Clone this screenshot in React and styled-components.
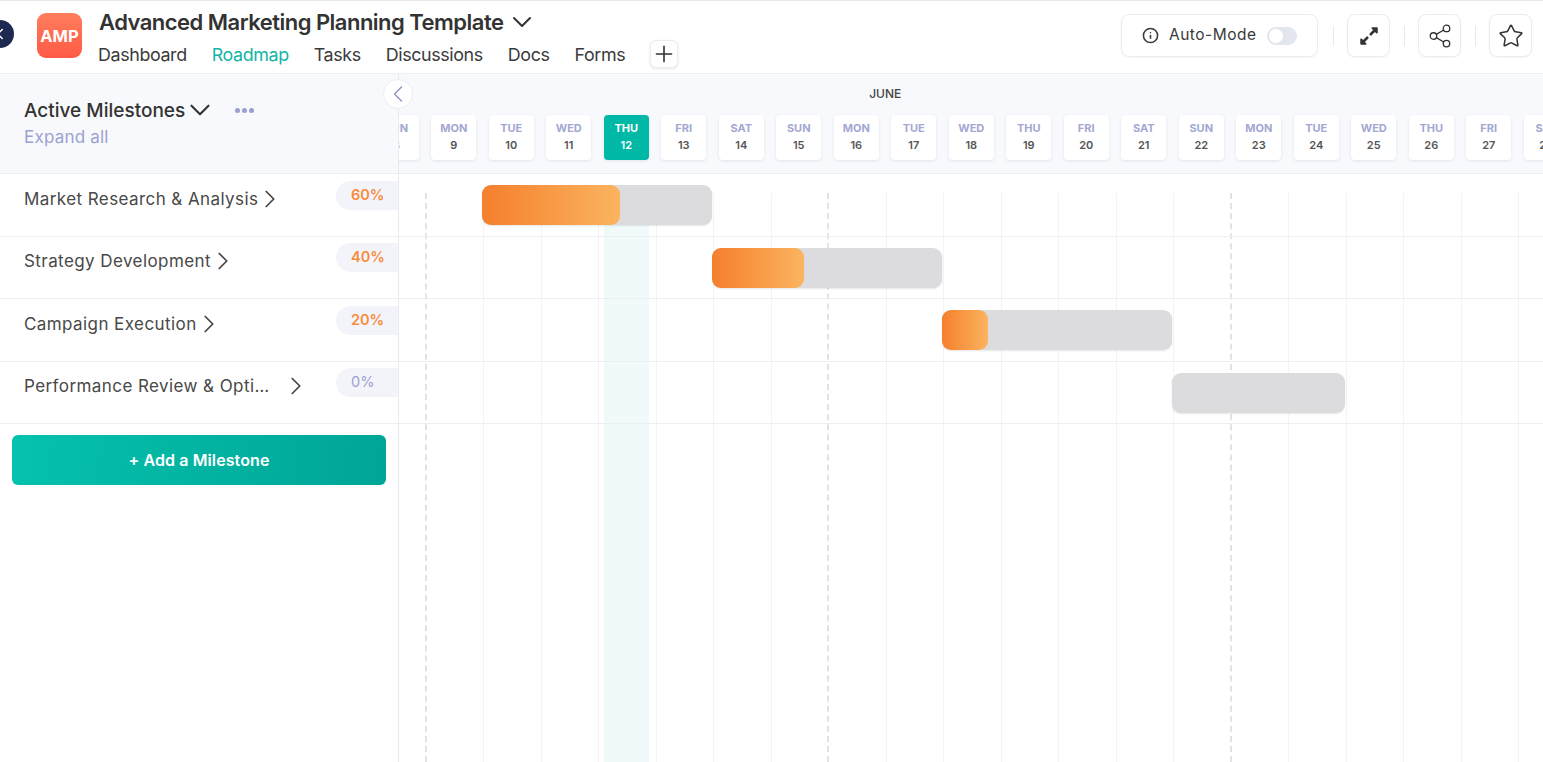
import React from "react";
import styled, { createGlobalStyle } from "styled-components";
import { ChevronDown, ChevronLeft, ChevronRight, Info, Plus, Star, Share2 } from "lucide-react";
import { FaExpandAlt } from "react-icons/fa";

const COL = 57.5;

const GlobalStyle = createGlobalStyle`
  html, body { margin: 0; padding: 0; background: #fff; overflow: hidden; }
  body { font-family: "Inter", "Liberation Sans", sans-serif; color: #333; }
  * { box-sizing: border-box; }
`;

const Page = styled.div`
  width: 1543px;
  height: 762px;
  display: flex;
  flex-direction: column;
  overflow: hidden;
`;

const Header = styled.header`
  height: 74px;
  flex-shrink: 0;
  display: flex;
  align-items: flex-start;
  border-top: 1px solid #e9e9ec;
  border-bottom: 1px solid #eeeff3;
  padding-right: 11px;
`;

const BackCircle = styled.div`
  width: 28px;
  height: 28px;
  margin: 19px 0 0 -14px;
  border-radius: 50%;
  background: #1d2951;
  color: #fff;
  display: flex;
  align-items: center;
  justify-content: center;
  flex-shrink: 0;
`;

const Logo = styled.div`
  width: 45px;
  height: 45px;
  margin: 12px 15px 0 23px;
  border-radius: 9px;
  background: linear-gradient(180deg, #ff7d5c 0%, #ff5a45 100%);
  color: #fff;
  font-size: 16.5px;
  font-weight: 700;
  display: flex;
  align-items: center;
  justify-content: center;
  flex-shrink: 0;
`;

const TitleBlock = styled.div`
  display: flex;
  flex-direction: column;
  flex-grow: 1;
`;

const TitleRow = styled.div`
  display: flex;
  align-items: center;
  gap: 3px;
  height: 26px;
  margin: 8px 0 0 2px;
`;

const Title = styled.h1`
  margin: 0;
  font-size: 22px;
  font-weight: 600;
  letter-spacing: -0.52px;
  color: #333;
  white-space: nowrap;
`;

const Tabs = styled.nav`
  display: flex;
  align-items: center;
  gap: 25px;
  margin: 5px 0 0 1px;
`;

const Tab = styled.a`
  font-size: 17.86px;
  letter-spacing: -0.38px;
  color: ${(p) => (p.$active ? "#12b5a5" : "#3a3a3a")};
  white-space: nowrap;
`;

const AddTab = styled.button`
  width: 28px;
  height: 28px;
  padding: 0;
  border: 1px solid #ececf0;
  border-radius: 6px;
  background: #fff;
  color: #333;
  box-shadow: 0 1px 3px rgba(0, 0, 0, 0.1);
  display: flex;
  align-items: center;
  justify-content: center;
`;

const Actions = styled.div`
  display: flex;
  align-items: center;
  margin-top: 13px;
`;

const AutoMode = styled.div`
  width: 197px;
  height: 43px;
  margin-right: 1px;
  border: 1px solid #ececf0;
  border-radius: 8px;
  box-shadow: 0 1px 2px rgba(0, 0, 0, 0.04);
  display: flex;
  align-items: center;
  padding-left: 20px;
  font-size: 15.5px;
  line-height: 40px;
  color: #3a3a3a;
  letter-spacing: 0.5px;
`;

const AutoLabel = styled.span`
  margin: -2px 10px 0 10px;
  white-space: nowrap;
`;

const Toggle = styled.span`
  width: 30px;
  height: 18px;
  border-radius: 9px;
  background: #e3e5ef;
  padding: 2px;
  display: flex;
  &::before {
    content: "";
    width: 14px;
    height: 14px;
    border-radius: 50%;
    background: #fff;
  }
`;

const Separator = styled.span`
  width: 1px;
  height: 20px;
  margin: 0 13.5px;
  background: #e9e9ec;
`;

const IconButton = styled.button`
  width: 43px;
  height: 43px;
  padding: 0;
  border: 1px solid #ececf0;
  border-radius: 8px;
  background: #fff;
  color: #333;
  box-shadow: 0 1px 2px rgba(0, 0, 0, 0.04);
  display: flex;
  align-items: center;
  justify-content: center;
`;

const Body = styled.main`
  flex-grow: 1;
  display: flex;
  min-height: 0;
`;

const Sidebar = styled.aside`
  width: 399px;
  flex-shrink: 0;
  position: relative;
  border-right: 1px solid #e9eaee;
`;

const SidebarHead = styled.div`
  height: 100px;
  padding: 24px 0 0 24px;
  background: #f8f9fc;
  border-bottom: 1px solid #eceef3;
`;

const HeadRow = styled.div`
  display: flex;
  align-items: center;
  height: 24px;
`;

const HeadTitle = styled.span`
  font-size: 19px;
  font-weight: 500;
  color: #333;
  white-space: nowrap;
  margin-right: -2px;
`;

const Dots = styled.span`
  display: flex;
  gap: 2px;
  margin-left: 18px;
  i {
    width: 5px;
    height: 5px;
    border-radius: 50%;
    background: #9a9fcf;
  }
`;

const ExpandAll = styled.a`
  display: block;
  margin-top: 5px;
  font-size: 17px;
  letter-spacing: 0.2px;
  color: #9ba1d0;
`;

const CollapseButton = styled.button`
  position: absolute;
  top: 5px;
  right: -15px;
  z-index: 3;
  width: 30px;
  height: 30px;
  padding: 0;
  border: 1px solid #eceef3;
  border-radius: 50%;
  background: #fff;
  color: #8d93c4;
  display: flex;
  align-items: center;
  justify-content: center;
`;

const MilestoneRow = styled.div`
  height: 62.5px;
  display: flex;
  justify-content: space-between;
  align-items: flex-start;
  padding-left: 24px;
  border-bottom: 1px solid #eceef1;
`;

const NameWrap = styled.div`
  display: flex;
  align-items: center;
  height: 24px;
  margin-top: 12.5px;
  color: #444;
  svg {
    margin-left: -3px;
  }
`;

const Name = styled.span`
  max-width: 260px;
  overflow: hidden;
  text-overflow: ellipsis;
  white-space: nowrap;
  font-size: 17px;
  letter-spacing: 0.42px;
  color: #484848;
`;

const Pill = styled.span`
  width: 62px;
  height: 29px;
  margin-top: 6.5px;
  padding-left: 15px;
  border-radius: 15px 0 0 15px;
  background: #f3f4f9;
  color: ${(p) => (p.$empty ? "#9ba1d0" : "#f98b3d")};
  font-size: 14.5px;
  font-weight: ${(p) => (p.$empty ? 400 : 600)};
  line-height: 28px;
`;

const AddMilestone = styled.button`
  display: block;
  width: 374px;
  height: 50px;
  margin: 11px 0 0 12px;
  padding-top: 1px;
  border: none;
  border-radius: 6px;
  background: linear-gradient(100deg, #05c2ae 0%, #00a596 100%);
  color: #fff;
  font-family: inherit;
  font-size: 16px;
  font-weight: 600;
  letter-spacing: 0.1px;
`;

const Timeline = styled.section`
  flex-grow: 1;
  min-width: 0;
  overflow: hidden;
`;

const Track = styled.div`
  position: relative;
  width: ${21 * COL}px;
  height: 100%;
  margin-left: -31px;
`;

const CalendarHead = styled.div`
  height: 100px;
  margin-right: -40px;
  padding-top: 12px;
  background: #f8f9fc;
  border-bottom: 1px solid #eceef3;
`;

const Month = styled.div`
  height: 17px;
  margin-bottom: 12px;
  padding-right: 213px;
  text-align: center;
  font-size: 12px;
  font-weight: 500;
  line-height: 15px;
  color: #444;
`;

const Days = styled.div`
  display: grid;
  grid-template-columns: repeat(21, ${COL}px);
`;

const DayCard = styled.div`
  width: 45px;
  height: 45px;
  margin-left: 5.75px;
  padding-bottom: 2px;
  border-radius: 4px;
  background: ${(p) => (p.$today ? "#00b8a6" : "#fff")};
  box-shadow: 0 1px 3px rgba(30, 40, 90, 0.1);
  display: flex;
  flex-direction: column;
  align-items: center;
  justify-content: center;
  gap: 3px;
  font-size: 11px;
  font-weight: 700;
  line-height: 14px;
`;

const DayName = styled.span`
  color: ${(p) => (p.$today ? "#fff" : "#a3a7d2")};
`;

const DayNumber = styled.span`
  font-weight: 600;
  color: ${(p) => (p.$today ? "#fff" : "#555")};
`;

/* vertical guides sit behind the bars */
const Guides = styled.div`
  position: absolute;
  top: 119px;
  left: 0;
  bottom: 0;
  display: grid;
  grid-template-columns: repeat(21, ${COL}px);
`;

const Guide = styled.div`
  position: relative;
  border-left: 1px ${(p) => (p.$week ? "dashed #e2e3e6" : "solid #f3f3f5")};
  ${(p) => p.$week && "border-left-width: 2px; margin-left: -1px;"}
  &::after {
    content: "";
    display: ${(p) => (p.$today ? "block" : "none")};
    position: absolute;
    top: 0;
    bottom: 0;
    left: 4.5px;
    width: 45.5px;
    background: #f0fafb;
  }
`;

const BarRow = styled.div`
  position: relative;
  z-index: 1;
  height: 62.5px;
  margin-right: -40px;
  padding-top: 0.5px;
  display: flex;
  align-items: center;
  border-bottom: 1px solid #eceef1;
`;

const Bar = styled.div`
  height: 40px;
  margin-left: ${(p) => p.$start * COL - 1}px;
  width: ${(p) => p.$span * COL}px;
  border-radius: 9px;
  background: #dcdcde;
  box-shadow: 0 1px 2px rgba(0, 0, 0, 0.1);
`;

const BarFill = styled.div`
  height: 100%;
  border-radius: 9px;
  background: linear-gradient(90deg, #f57f2d 0%, #fbb45f 100%);
`;

const milestones = [
  { name: "Market Research & Analysis", pct: 60, start: 2, span: 4 },
  { name: "Strategy Development", pct: 40, start: 6, span: 4 },
  { name: "Campaign Execution", pct: 20, start: 10, span: 4 },
  { name: "Performance Review & Optimization", pct: 0, start: 14, span: 3 },
];

const dayNames = ["SUN", "MON", "TUE", "WED", "THU", "FRI", "SAT"];
const days = Array.from({ length: 21 }, (_, i) => ({
  label: dayNames[i % 7],
  date: i + 8,
}));

const App = () => {
  return (
    <Page>
      <GlobalStyle />
      <Header>
        <BackCircle>
          <ChevronLeft size={18} strokeWidth={2} />
        </BackCircle>
        <Logo>AMP</Logo>
        <TitleBlock>
          <TitleRow>
            <Title>Advanced Marketing Planning Template</Title>
            <ChevronDown size={32} strokeWidth={1.5} color="#333" />
          </TitleRow>
          <Tabs>
            <Tab>Dashboard</Tab>
            <Tab $active>Roadmap</Tab>
            <Tab>Tasks</Tab>
            <Tab>Discussions</Tab>
            <Tab>Docs</Tab>
            <Tab>Forms</Tab>
            <AddTab>
              <Plus size={26} strokeWidth={1.5} />
            </AddTab>
          </Tabs>
        </TitleBlock>
        <Actions>
          <AutoMode>
            <Info size={17} strokeWidth={2.2} />
            <AutoLabel>Auto-Mode</AutoLabel>
            <Toggle />
          </AutoMode>
          <Separator />
          <IconButton>
            <FaExpandAlt size={20} />
          </IconButton>
          <Separator />
          <IconButton>
            <Share2 size={26} strokeWidth={1.2} />
          </IconButton>
          <Separator />
          <IconButton>
            <Star size={26} strokeWidth={1.4} />
          </IconButton>
        </Actions>
      </Header>
      <Body>
        <Sidebar>
          <CollapseButton>
            <ChevronLeft size={34} strokeWidth={1.2} />
          </CollapseButton>
          <SidebarHead>
            <HeadRow>
              <HeadTitle>Active Milestones</HeadTitle>
              <ChevronDown size={34} strokeWidth={1.5} color="#333" />
              <Dots>
                <i />
                <i />
                <i />
              </Dots>
            </HeadRow>
            <ExpandAll>Expand all</ExpandAll>
          </SidebarHead>
          {milestones.map((m) => (
            <MilestoneRow key={m.name}>
              <NameWrap>
                <Name>{m.name}</Name>
                <ChevronRight size={30} strokeWidth={1.4} />
              </NameWrap>
              <Pill $empty={m.pct === 0}>{m.pct}%</Pill>
            </MilestoneRow>
          ))}
          <AddMilestone>+ Add a Milestone</AddMilestone>
        </Sidebar>
        <Timeline>
          <Track>
            <CalendarHead>
              <Month>JUNE</Month>
              <Days>
                {days.map((d) => (
                  <DayCard key={d.date} $today={d.date === 12}>
                    <DayName $today={d.date === 12}>{d.label}</DayName>
                    <DayNumber $today={d.date === 12}>{d.date}</DayNumber>
                  </DayCard>
                ))}
              </Days>
            </CalendarHead>
            <Guides>
              {days.map((d) => (
                <Guide key={d.date} $week={d.label === "MON"} $today={d.date === 12} />
              ))}
            </Guides>
            {milestones.map((m) => (
              <BarRow key={m.name}>
                <Bar $start={m.start} $span={m.span}>
                  {m.pct > 0 && <BarFill style={{ width: `${m.pct}%` }} />}
                </Bar>
              </BarRow>
            ))}
          </Track>
        </Timeline>
      </Body>
    </Page>
  );
};

export default App;
